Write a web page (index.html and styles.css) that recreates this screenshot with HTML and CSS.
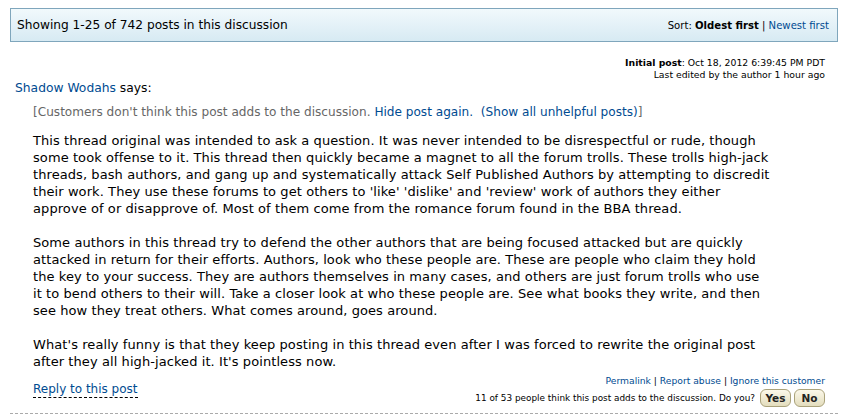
FILE: index.html
```html
<!DOCTYPE html>
<html>
<head>
<meta charset="utf-8">
<link rel="stylesheet" href="styles.css">
</head>
<body>
<div class="page">
  <div class="topbar">
    <span class="showing">Showing 1-25 of 742 posts in this discussion</span>
    <span class="sort">Sort: <b>Oldest first</b> | <a href="#">Newest first</a></span>
  </div>
  <div class="meta">
    <div><b>Initial post</b>: Oct 18, 2012 6:39:45 PM PDT</div>
    <div>Last edited by the author 1 hour ago</div>
  </div>
  <div class="author"><a href="#">Shadow Wodahs</a> says:</div>
  <div class="post">
    <div class="hidden-note">[Customers don't think this post adds to the discussion. <a href="#">Hide post again.</a>&nbsp; <a href="#">(Show all unhelpful posts)</a>]</div>
    <div class="body">
      <p>This thread original was intended to ask a question. It was never intended to be disrespectful or rude, though<br>some took offense to it. This thread then quickly became a magnet to all the forum trolls. These trolls high-jack<br>threads, bash authors, and gang up and systematically attack Self Published Authors by attempting to discredit<br>their work. They use these forums to get others to 'like' 'dislike' and 'review' work of authors they either<br>approve of or disapprove of. Most of them come from the romance forum found in the BBA thread.</p>
      <p>Some authors in this thread try to defend the other authors that are being focused attacked but are quickly<br>attacked in return for their efforts. Authors, look who these people are. These are people who claim they hold<br>the key to your success. They are authors themselves in many cases, and others are just forum trolls who use<br>it to bend others to their will. Take a closer look at who these people are. See what books they write, and then<br>see how they treat others. What comes around, goes around.</p>
      <p>What's really funny is that they keep posting in this thread even after I was forced to rewrite the original post<br>after they all high-jacked it. It's pointless now.</p>
    </div>
    <div class="footer">
      <a href="#" class="reply">Reply to this post</a>
      <div class="actions">
        <div class="links"><a href="#">Permalink</a> | <a href="#">Report abuse</a> | <a href="#">Ignore this customer</a></div>
        <div class="vote"><span class="vote-text">11 of 53 people think this post adds to the discussion. Do you?</span> <span class="btn">Yes</span><span class="btn">No</span></div>
      </div>
    </div>
  </div>
  <div class="divider"></div>
</div>
</body>
</html>
```
FILE: styles.css
```css
html, body {
  margin: 0;
  padding: 0;
  background: #fff;
}
body {
  font-family: "DejaVu Sans", Verdana, sans-serif;
  color: #000;
}
a {
  color: #004b91;
  text-decoration: none;
}
.page {
  padding: 8px 15px 0 10px;
}
.topbar {
  display: flex;
  justify-content: space-between;
  align-items: center;
  height: 32px;
  border: 1px solid #7fa6bc;
  background: linear-gradient(#f1f9fc, #d7eaf3);
  padding: 0 8px 0 6px;
}
.showing {
  font-size: 12.2px;
}
.sort {
  font-size: 10.1px;
}
.meta {
  text-align: right;
  font-size: 9.3px;
  line-height: 12px;
  margin-top: 15px;
  padding-right: 13px;
}
.author {
  font-size: 12.3px;
  line-height: 15px;
  padding-left: 5px;
}
.post {
  padding-left: 23px;
  padding-right: 13px;
}
.hidden-note {
  color: #666;
  font-size: 12.1px;
  line-height: 17px;
  margin-top: 8px;
}
.body {
  font-size: 13px;
  line-height: 17px;
  letter-spacing: 0.08px;
  margin-top: 11px;
}
.body p {
  margin: 0 0 17px 0;
}
.body p:last-child {
  margin-bottom: 0;
}
.footer {
  display: flex;
  justify-content: space-between;
  align-items: flex-start;
  margin-top: 4px;
}
.reply {
  font-size: 12px;
  line-height: 15px;
  margin-top: 8px;
  border-bottom: 1px dashed #000;
}
.actions {
  text-align: right;
  font-size: 9.2px;
}
.links {
  line-height: 14px;
}
.vote {
  display: flex;
  align-items: center;
  justify-content: flex-end;
  height: 20px;
}
.vote-text {
  font-size: 8.9px;
}
.btn {
  display: inline-block;
  box-sizing: border-box;
  width: 31px;
  text-align: center;
  font-weight: bold;
  font-size: 10.5px;
  line-height: 16px;
  margin-left: 3px;
  border: 1px solid #aaa27a;
  border-radius: 6px;
  background: linear-gradient(#fbf8ea, #e3ddbd);
  color: #222;
}
.vote-text + .btn {
  margin-left: 5px;
}
.divider {
  margin-top: 5px;
  border-top: 1px dashed #aaa;
}
```
